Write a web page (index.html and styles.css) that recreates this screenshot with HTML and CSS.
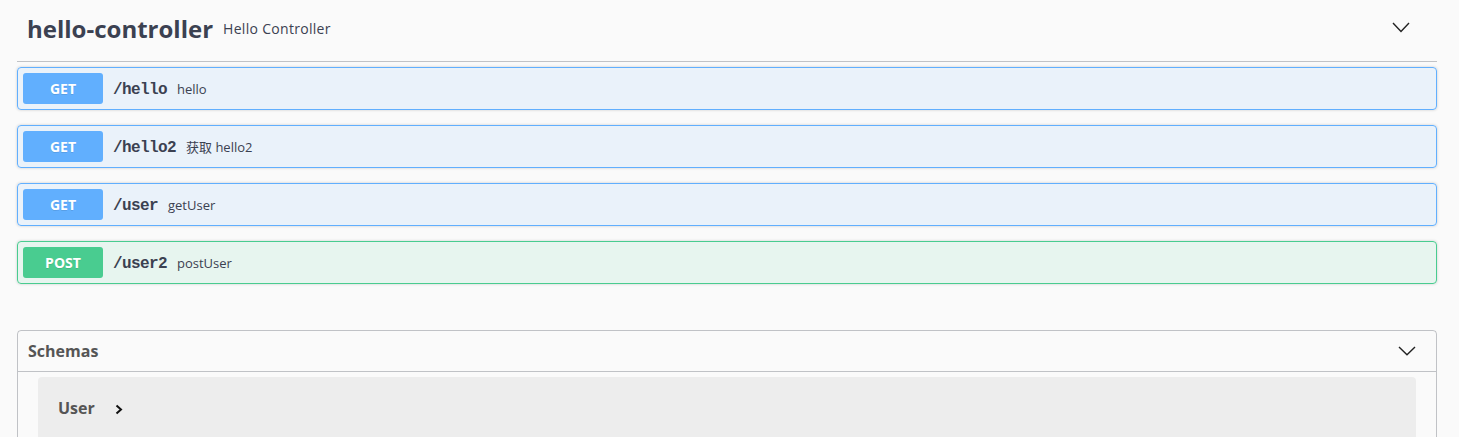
FILE: index.html
```html
<!DOCTYPE html>
<html lang="en">
<head>
<meta charset="utf-8">
<title>hello-controller</title>
<link rel="stylesheet" href="styles.css">
</head>
<body>
<div class="wrapper">
  <section class="tag-section">
    <h3 class="opblock-tag">
      <span class="tag-name">hello-controller</span>
      <small class="tag-desc">Hello Controller</small>
      <svg class="chev-down" width="18" height="11" viewBox="0 0 18 11"><polyline points="1,1 9,9.5 17,1" fill="none" stroke="#222" stroke-width="1.4"/></svg>
    </h3>
    <div class="opblock get">
      <span class="method">GET</span>
      <span class="path">/hello</span>
      <span class="desc">hello</span>
    </div>
    <div class="opblock get">
      <span class="method">GET</span>
      <span class="path">/hello2</span>
      <span class="desc">获取 hello2</span>
    </div>
    <div class="opblock get">
      <span class="method">GET</span>
      <span class="path">/user</span>
      <span class="desc">getUser</span>
    </div>
    <div class="opblock post">
      <span class="method">POST</span>
      <span class="path">/user2</span>
      <span class="desc">postUser</span>
    </div>
  </section>
  <section class="models">
    <h4 class="models-title">
      <span>Schemas</span>
      <svg class="chev-down" width="18" height="10" viewBox="0 0 18 10"><polyline points="1,1 9,8.8 17,1" fill="none" stroke="#222" stroke-width="1.4"/></svg>
    </h4>
    <div class="model-box">
      <span class="model-name">User</span>
      <svg class="chev-right" width="8" height="11" viewBox="0 0 8 11"><polyline points="1.5,1.5 6,5.5 1.5,9.5" fill="none" stroke="#111" stroke-width="2"/></svg>
    </div>
  </section>
</div>
</body>
</html>
```

FILE: styles.css
```css
html, body {
  margin: 0;
  padding: 0;
  background: #fafafa;
}
body {
  font-family: "Open Sans", "Noto Sans CJK SC", sans-serif;
  color: #3b4151;
}
.wrapper {
  padding: 0 22px 0 17px;
}
.opblock-tag {
  display: flex;
  align-items: center;
  margin: 0 0 5px;
  padding: 10px 27px 10px 10px;
  height: 41px;
  border-bottom: 1px solid rgba(59, 65, 81, 0.3);
  font-size: 24px;
  font-weight: 700;
  color: #3b4151;
}
.tag-name {
  line-height: 1;
  position: relative;
  top: -2px;
}
.tag-desc {
  flex: 1;
  padding: 0 10px;
  font-size: 14px;
  font-weight: 400;
  letter-spacing: 0.3px;
  position: relative;
  top: -2px;
}
.opblock-tag .chev-down {
  position: relative;
  top: -3px;
}
.opblock {
  display: flex;
  align-items: center;
  margin: 0 0 15px;
  padding: 5px;
  border: 1px solid;
  border-radius: 4px;
  box-shadow: 0 0 3px rgba(0, 0, 0, 0.19);
}
.opblock.get {
  border-color: #61affe;
  background: rgba(97, 175, 254, 0.1);
}
.opblock.post {
  border-color: #49cc90;
  background: rgba(73, 204, 144, 0.1);
}
.method {
  min-width: 80px;
  padding: 6px 0;
  line-height: 19px;
  border-radius: 3px;
  text-align: center;
  font-size: 14px;
  font-weight: 700;
  color: #fff;
  text-shadow: 0 1px 0 rgba(0, 0, 0, 0.1);
}
.get .method { background: #61affe; }
.post .method { background: #49cc90; }
.path {
  padding: 0 10px;
  font-family: "Liberation Mono", "Courier New", monospace;
  font-size: 16px;
  letter-spacing: -0.6px;
  font-weight: 700;
  color: #3b4151;
  position: relative;
  top: 1px;
}
.desc {
  font-size: 13px;
  color: #3b4151;
}
.models {
  margin: 46px 0 0;
  border: 1px solid rgba(59, 65, 81, 0.3);
  border-radius: 4px;
  height: 200px;
}
.models-title {
  display: flex;
  align-items: center;
  justify-content: space-between;
  margin: 0;
  padding: 10px 20px 10px 10px;
  line-height: 20px;
  border-bottom: 1px solid rgba(59, 65, 81, 0.3);
  font-size: 16px;
  font-weight: 700;
  color: #555;
}
.model-box {
  display: flex;
  align-items: flex-start;
  margin: 5px 20px 15px;
  padding: 20px;
  height: 100px;
  border-radius: 4px;
  background: rgba(0, 0, 0, 0.05);
}
.model-name {
  line-height: 22px;
  font-size: 16px;
  font-weight: 700;
  color: #555;
}
.chev-right {
  margin: 7px 0 0 20px;
}
```
